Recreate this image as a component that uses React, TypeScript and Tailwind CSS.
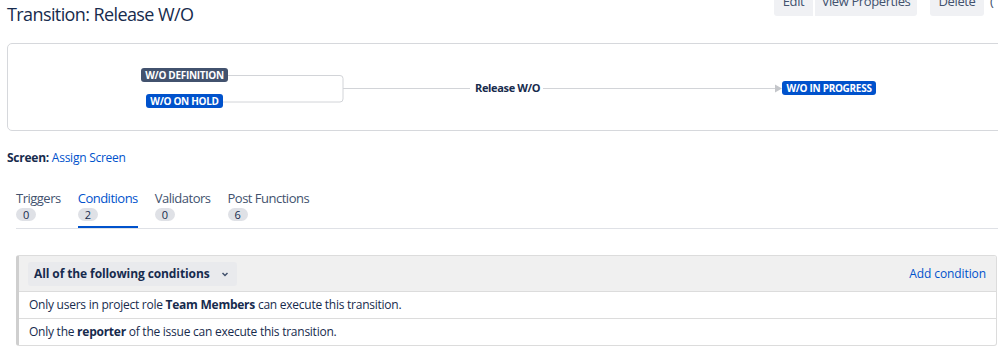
import React from "react";

const font = { fontFamily: '"Open Sans", "Noto Sans", Arial, sans-serif' };

function Lozenge(props: { label: string; tone: "dark" | "blue"; className: string }) {
  const bg = props.tone === "dark" ? "bg-[#42526e]" : "bg-[#0052cc]";
  return (
    <span
      className={`absolute ${bg} ${props.className} h-[14px] text-white text-[10px] font-bold leading-[14px] tracking-[-0.3px] text-center rounded-[3px] whitespace-nowrap`}
    >
      {props.label}
    </span>
  );
}

function Tab(props: { label: string; count: number; active?: boolean }) {
  return (
    <div
      className={`flex flex-col items-start pb-[6px] border-b-2 ${
        props.active ? "border-[#0052cc]" : "border-transparent"
      }`}
    >
      <span
        className={`text-[13px] leading-[18px] tracking-[-0.5px] ${
          props.active ? "text-[#0052cc]" : "text-[#42526e]"
        }`}
      >
        {props.label}
      </span>
      <span className="mt-[1px] bg-[#dfe1e6] text-[#172b4d] text-[11px] leading-[13px] rounded-full px-[7px]">
        {props.count}
      </span>
    </div>
  );
}

export default function App() {
  return (
    <div className="w-[998px] h-[356px] overflow-hidden bg-white text-[#172b4d]" style={font}>
      <div className="w-[1040px] pl-[7px]">
        {/* header */}
        <div className="flex items-start h-[43px]">
          <h1 className="w-[767px] text-[18px] leading-[28px] tracking-[-0.6px] text-[#172b4d] font-normal">
            Transition: Release W/O
          </h1>
          <div className="mt-[-14px] flex text-[13px] tracking-[-0.4px] text-[#42526e]">
            <span className="w-[39px] text-center bg-[#f0f1f4] h-[30px] leading-[30px] rounded-l-[3px]">Edit</span>
            <span className="w-[102px] text-center bg-[#f0f1f4] h-[30px] leading-[30px] ml-[2px] rounded-r-[3px]">
              View Properties
            </span>
            <span className="w-[54px] text-center bg-[#f0f1f4] h-[30px] leading-[30px] ml-[13px] rounded-[3px]">
              Delete
            </span>
            <span className="ml-[6px] leading-[30px]">(</span>
          </div>
        </div>

        {/* diagram */}
        <div className="relative h-[88px] border border-[#d6d8dc] rounded-[5px]">
          <svg className="absolute left-0 top-0" width="1000" height="88">
            <path d="M220 31.5 H332 a3 3 0 0 1 3 3 V55 a3 3 0 0 1 -3 3 H215" fill="none" stroke="#d2d4d8" strokeWidth="1" />
            <path d="M335 44.5 H462 M535 44.5 H767" fill="none" stroke="#d2d4d8" strokeWidth="1" />
            <path d="M767 40.5 L774 44.5 L767 48.5 Z" fill="#c4c6ca" />
          </svg>
          <Lozenge label="W/O DEFINITION" tone="dark" className="left-[133px] top-[24px] w-[87px]" />
          <Lozenge label="W/O ON HOLD" tone="blue" className="left-[138px] top-[50px] w-[77px]" />
          <span className="absolute left-[467px] top-[36px] text-[11px] font-bold leading-[16px] tracking-[-0.35px] text-[#172b4d]">
            Release W/O
          </span>
          <Lozenge label="W/O IN PROGRESS" tone="blue" className="left-[774px] top-[37px] w-[94px]" />
        </div>

        {/* screen */}
        <div className="mt-[19px] text-[12px] leading-[16px] tracking-[-0.25px]">
          <span className="font-bold">Screen:</span> <span className="text-[#0052cc]">Assign Screen</span>
        </div>

        {/* tabs */}
        <div className="mt-[23px] ml-[9px] w-[982px] flex gap-[17px] border-b border-[#dfe1e6] h-[40px]">
          <Tab label="Triggers" count={0} />
          <Tab label="Conditions" count={2} active />
          <Tab label="Validators" count={0} />
          <Tab label="Post Functions" count={6} />
        </div>

        {/* conditions */}
        <div className="mt-[26px] ml-[9px] w-[981px] border border-[#dcdcdc] border-l-[3px] border-l-[#cfcfcf] rounded-[3px] overflow-hidden">
          <div className="h-[36px] bg-[#f0f0f0] flex items-center justify-between pl-[9px] pr-[10px] border-b border-[#dcdcdc]">
            <div className="h-[24px] w-[209px] bg-[#e9eaed] rounded-[3px] flex items-center px-[6px] gap-[10px]">
              <span className="text-[12px] font-bold tracking-[-0.1px]">All of the following conditions</span>
              <svg width="10" height="10" viewBox="0 0 10 10">
                <path d="M2.5 4 L5 6.5 L7.5 4" fill="none" stroke="#42526e" strokeWidth="1.5" />
              </svg>
            </div>
            <span className="text-[12px] text-[#0052cc] tracking-[-0.1px]">Add condition</span>
          </div>
          <div className="h-[27px] flex items-center px-[10px] text-[12px] tracking-[-0.25px] border-b border-[#dcdcdc]">
            <span>
              Only users in project role <b>Team Members</b> can execute this transition.
            </span>
          </div>
          <div className="h-[26px] flex items-center px-[10px] text-[12px] tracking-[-0.25px]">
            <span>
              Only the <b>reporter</b> of the issue can execute this transition.
            </span>
          </div>
        </div>
      </div>
    </div>
  );
}
